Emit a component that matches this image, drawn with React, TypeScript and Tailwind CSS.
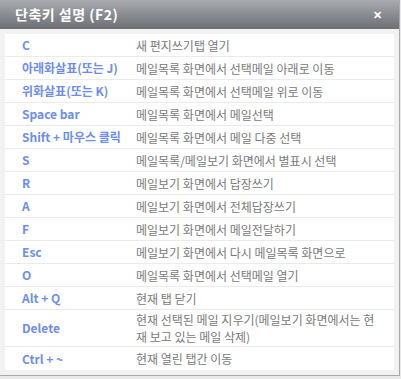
const rows: { key: string; desc: React.ReactNode; tall?: boolean }[] = [
  { key: "C", desc: "새 편지쓰기탭 열기" },
  { key: "아래화살표(또는 J)", desc: "메일목록 화면에서 선택메일 아래로 이동" },
  { key: "위화살표(또는 K)", desc: "메일목록 화면에서 선택메일 위로 이동" },
  { key: "Space bar", desc: "메일목록 화면에서 메일선택" },
  { key: "Shift + 마우스 클릭", desc: "메일목록 화면에서 메일 다중 선택" },
  { key: "S", desc: "메일목록/메일보기 화면에서 별표시 선택" },
  { key: "R", desc: "메일보기 화면에서 답장쓰기" },
  { key: "A", desc: "메일보기 화면에서 전체답장쓰기" },
  { key: "F", desc: "메일보기 화면에서 메일전달하기" },
  { key: "Esc", desc: "메일보기 화면에서 다시 메일목록 화면으로" },
  { key: "O", desc: "메일목록 화면에서 선택메일 열기" },
  { key: "Alt + Q", desc: "현재 탭 닫기" },
  {
    key: "Delete",
    desc: (
      <>
        <div>현재 선택된 메일 지우기(메일보기 화면에서는 현</div>
        <div>재 보고 있는 메일 삭제)</div>
      </>
    ),
    tall: true,
  },
  { key: "Ctrl + ~", desc: "현재 열린 탭간 이동" },
];

export default function App() {
  return (
    <div className="h-[379px] w-[401px] bg-[#e9e9e9] font-['Noto_Sans_CJK_KR','Noto_Sans',sans-serif]">
      <div className="flex h-[376px] w-[400px] flex-col border-r border-b border-[#a9a9a9] bg-[#f2f2f2]">
        <div className="flex h-[29px] items-center justify-between bg-gradient-to-b from-[#a9abaf] to-[#6c6f74] pr-[17px] pl-[15px]">
          <span className="text-[14px] font-bold tracking-[0.5px] text-white">단축키 설명 (F2)</span>
          <span className="text-[11px] font-bold leading-none text-white">✕</span>
        </div>
        <div className="mx-[5px] mt-[5px] bg-white">
          {rows.map((r, i) => (
            <div
              key={r.key}
              className={`flex items-center ${i < rows.length - 1 ? "border-b border-[#ebebeb]" : ""} ${
                r.tall ? "h-[37px]" : "h-[23px]"
              }`}
            >
              <div className="w-[131px] shrink-0 pl-[17px] text-[12px] font-bold whitespace-nowrap text-[#6d8df4]">
                {r.key}
              </div>
              <div className="text-[12px] leading-[17px] whitespace-nowrap text-[#7a7a7a]">{r.desc}</div>
            </div>
          ))}
        </div>
      </div>
    </div>
  );
}
